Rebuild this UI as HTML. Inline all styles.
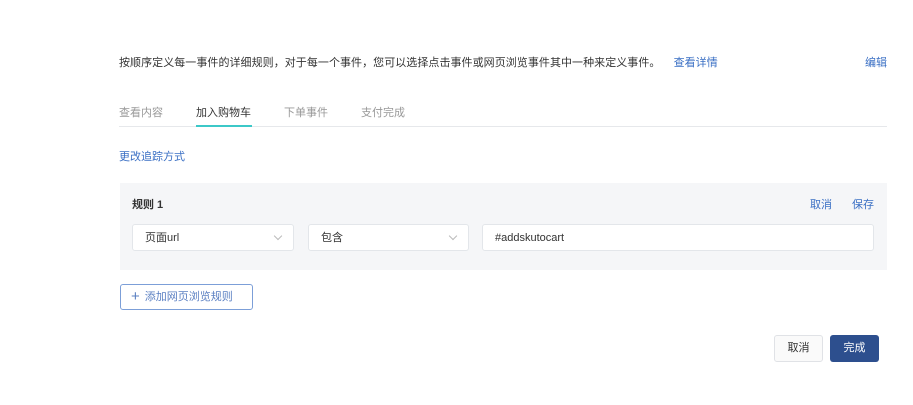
<!DOCTYPE html>
<html><head><meta charset="utf-8"><style>
*{box-sizing:border-box;margin:0;padding:0}
body{width:913px;height:405px;background:#fff;font-family:"Liberation Sans","Noto Sans CJK SC",sans-serif;font-size:11px;color:#333;position:relative;overflow:hidden}
.a{position:absolute;white-space:nowrap}
.blue{color:#3a6fc4}
.sel{position:absolute;top:224px;height:27px;background:#fff;border:1px solid #e3e6ea;border-radius:3px;padding-left:12px;line-height:26px;color:#333}
.chev{position:absolute;right:12px;top:8px;width:6px;height:6px;border-right:1px solid #bbb;border-bottom:1px solid #bbb;transform:rotate(45deg)}
</style></head><body>
<div class="a" style="left:119px;top:54px;letter-spacing:0.05px">按顺序定义每一事件的详细规则，对于每一个事件，您可以选择点击事件或网页浏览事件其中一种来定义事件。 <span class="blue" style="margin-left:10px">查看详情</span></div>
<div class="a blue" style="left:865px;top:54px">编辑</div>
<div class="a" style="left:119px;top:104px;color:#999">查看内容</div>
<div class="a" style="left:196px;top:104px;color:#333">加入购物车</div>
<div class="a" style="left:284px;top:104px;color:#999">下单事件</div>
<div class="a" style="left:361px;top:104px;color:#999">支付完成</div>
<div class="a" style="left:119px;top:126px;width:768px;height:1px;background:#e6e8eb"></div>
<div class="a" style="left:196px;top:125px;width:56px;height:2px;background:#3cc8c8"></div>
<div class="a blue" style="left:119px;top:148px">更改追踪方式</div>
<div class="a" style="left:120px;top:183px;width:767px;height:87px;background:#f5f6f8"></div>
<div class="a" style="left:132px;top:196px;font-weight:bold;color:#333">规则 1</div>
<div class="a blue" style="left:810px;top:196px">取消</div>
<div class="a blue" style="left:852px;top:196px">保存</div>
<div class="sel" style="left:132px;width:162px">页面url<span class="chev"></span></div>
<div class="sel" style="left:308px;width:161px">包含<span class="chev"></span></div>
<div class="sel" style="left:482px;width:392px">#addskutocart</div>
<div class="a" style="left:120px;top:284px;width:133px;height:26px;border:1px solid #7c9fd8;border-radius:3px;line-height:24px;padding-left:10px;color:#5a7fc2"><span style="font-size:15px;vertical-align:-1px;margin-right:5px">+</span>添加网页浏览规则</div>
<div class="a" style="left:774px;top:335px;width:49px;height:27px;border:1px solid #e0e2e6;border-radius:3px;background:#fafafa;text-align:center;line-height:25px">取消</div>
<div class="a" style="left:830px;top:335px;width:49px;height:27px;border-radius:3px;background:#2d4f8e;color:#fff;text-align:center;line-height:27px">完成</div>
</body></html>
